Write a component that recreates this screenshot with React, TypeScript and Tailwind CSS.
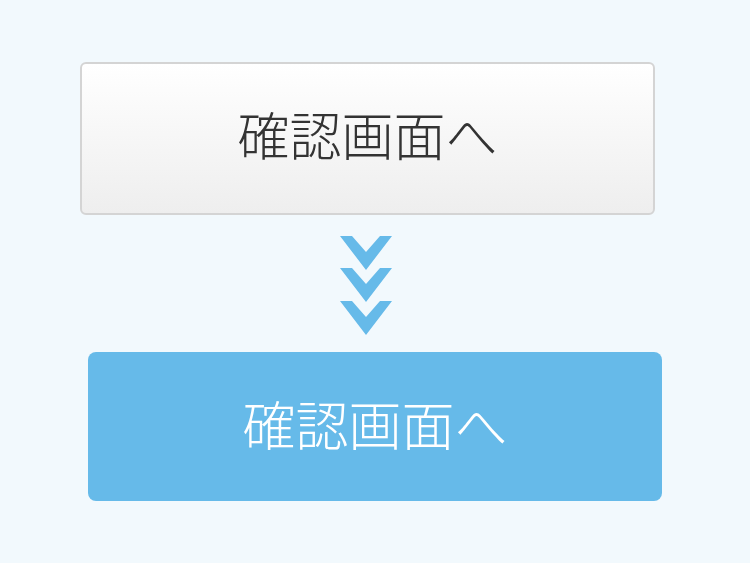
import React from 'react';

const font = { fontFamily: '"Noto Sans CJK JP", "Noto Sans", sans-serif' };

const Chevron: React.FC = () => (
  <svg width="52" height="34" viewBox="0 0 52 34" className="block">
    <polygon points="0,0 12,0 26,16 40,0 52,0 26,34" fill="#66bae9" />
  </svg>
);

const App: React.FC = () => {
  return (
    <div className="w-[750px] h-[563px] bg-[#f2f9fd] overflow-hidden" style={font}>
      {/* Default button */}
      <button
        className="ml-[80px] mt-[62px] w-[575px] h-[153px] flex items-center justify-center pb-[10px] rounded-[6px] border-2 border-[#d4d4d4] bg-gradient-to-b from-white to-[#eeeeee] text-[52px] text-[#333333] font-light"
        style={font}
      >
        確認画面へ
      </button>

      {/* Arrows */}
      <div className="ml-[340px] mt-[21px] flex flex-col">
        <div className="-mb-[2px]"><Chevron /></div>
        <div className="-mb-[1px]"><Chevron /></div>
        <Chevron />
      </div>

      {/* Primary button */}
      <button
        className="ml-[88px] mt-[17px] w-[574px] h-[149px] flex items-center justify-center pb-[6px] rounded-[8px] bg-[#66bae9] text-[53px] text-white font-light"
        style={font}
      >
        確認画面へ
      </button>
    </div>
  );
};

export default App;
